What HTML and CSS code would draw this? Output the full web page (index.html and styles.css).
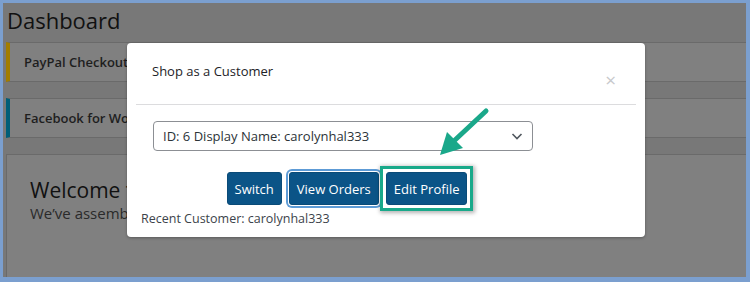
FILE: index.html
```html
<!DOCTYPE html>
<html lang="en">
<head>
    <meta charset="UTF-8">
    <meta name="viewport" content="width=device-width, initial-scale=1.0">
    <title>Dashboard - Shop as a Customer</title>
    <link rel="stylesheet" href="styles.css">
</head>
<body>
    <div class="frame">
        <!-- Dashboard behind the modal -->
        <h1 class="page-title">Dashboard</h1>

        <div class="notice notice-gold">
            <p>PayPal Checkout requires an update to keep working</p>
        </div>

        <div class="notice notice-teal">
            <p>Facebook for WooCommerce is almost ready</p>
        </div>

        <div class="welcome-panel">
            <h2>Welcome to WordPress!</h2>
            <p>We&#8217;ve assembled some links to get you started:</p>
        </div>

        <!-- Shop as a Customer modal -->
        <div class="modal">
            <div class="modal-header">
                <h3>Shop as a Customer</h3>
                <span class="modal-close">&times;</span>
            </div>
            <div class="modal-body">
                <div class="select-box">
                    <span>ID: 6 Display Name: carolynhal333</span>
                    <svg class="chevron" width="14" height="14" viewBox="0 0 14 14">
                        <path d="M2.5 5 L7 9.5 L11.5 5" fill="none" stroke="#50575e" stroke-width="1.6"/>
                    </svg>
                </div>
                <div class="actions">
                    <button class="btn">Switch</button>
                    <button class="btn btn-focus">View Orders</button>
                    <span class="highlight"><button class="btn">Edit Profile</button></span>
                </div>
            </div>
            <p class="recent">Recent Customer: carolynhal333</p>
        </div>

        <!-- annotation arrow -->
        <svg class="arrow" width="60" height="60" viewBox="0 0 60 60">
            <line x1="51" y1="8" x2="20" y2="37" stroke="#1aa88a" stroke-width="5" stroke-linecap="round"/>
            <polygon points="5,52 12,29 28,45" fill="#1aa88a"/>
        </svg>
    </div>
</body>
</html>
```

FILE: styles.css
```css
body {
    margin: 0;
    background-color: #7b9fcf;
    font-family: 'Open Sans', 'Noto Sans', sans-serif;
}

.frame {
    position: relative;
    width: 743px;
    height: 274px;
    margin: 3px 0 0 3px;
    background-color: #787878;
    overflow: hidden;
}

.page-title {
    margin: 0;
    padding: 2px 0 0 4px;
    height: 37px;
    font-size: 22px;
    font-weight: 400;
    line-height: 30px;
    color: #111;
}

.notice {
    margin: 0 -20px 16px 3px;
    height: 38px;
    background-color: #808080;
    border: 1px solid #6a6a6a;
    border-left: 4px solid #a27d00;
    display: flex;
    align-items: center;
}

.notice-teal {
    border-left-color: #005e78;
}

.notice p {
    margin: 0 0 0 14px;
    font-size: 13px;
    font-weight: 600;
    color: #1e1e1e;
    white-space: nowrap;
}

.welcome-panel {
    margin: 0 -20px 0 3px;
    height: 200px;
    background-color: #808080;
    border: 1px solid #6a6a6a;
    padding: 22px 0 0 23px;
}

.welcome-panel h2 {
    margin: 0;
    font-size: 21px;
    font-weight: 400;
    line-height: 26px;
    color: #111;
}

.welcome-panel p {
    margin: 0;
    font-size: 15px;
    line-height: 20px;
    color: #2a2a2a;
}

.modal {
    position: absolute;
    left: 124px;
    top: 40px;
    width: 518px;
    height: 194px;
    background-color: #fff;
    border-radius: 4px;
    box-shadow: 0 1px 3px rgba(0, 0, 0, 0.3);
}

.modal-header {
    margin: 0 9px;
    height: 61px;
    border-bottom: 1px solid #dcdcde;
    display: flex;
    justify-content: space-between;
    padding: 0 20px 0 16px;
}

.modal-header h3 {
    margin: 19px 0 0;
    font-size: 13px;
    font-weight: 400;
    line-height: 18px;
    color: #1d2327;
}

.modal-close {
    margin-top: 27px;
    font-size: 19px;
    line-height: 20px;
    height: 20px;
    color: #c8c9cc;
}

.modal-body {
    padding: 16px 0 0 26px;
    width: 380px;
}

.select-box {
    box-sizing: border-box;
    height: 30px;
    border: 1px solid #8c8f94;
    border-radius: 4px;
    padding: 0 8px 0 9px;
    display: flex;
    align-items: center;
    justify-content: space-between;
    font-size: 13px;
    color: #2c3338;
}

.actions {
    margin-top: 21px;
    display: flex;
    justify-content: center;
    align-items: center;
    gap: 7px;
    padding-left: 8px;
}

.btn {
    height: 33px;
    padding: 0 7px;
    border: 1px solid #0a4b78;
    border-radius: 3px;
    background-color: #0b5487;
    color: #fff;
    font-family: 'Open Sans', 'Noto Sans', sans-serif;
    font-size: 13px;
}

.btn-focus {
    box-shadow: 0 0 0 1px #fff, 0 0 0 3px #5d9bd6;
}

.highlight {
    display: flex;
    margin: -7px -6px -7px -6px;
    padding: 3px;
    border: 3px solid #19a98a;
    background-color: #fff;
    box-shadow: 1px 1px 4px 1px rgba(0, 0, 0, 0.3);
}

.recent {
    margin: 5px 0 0 14px;
    font-size: 12.5px;
    line-height: 18px;
    color: #3c434a;
}

.arrow {
    position: absolute;
    left: 432px;
    top: 100px;
}
```
